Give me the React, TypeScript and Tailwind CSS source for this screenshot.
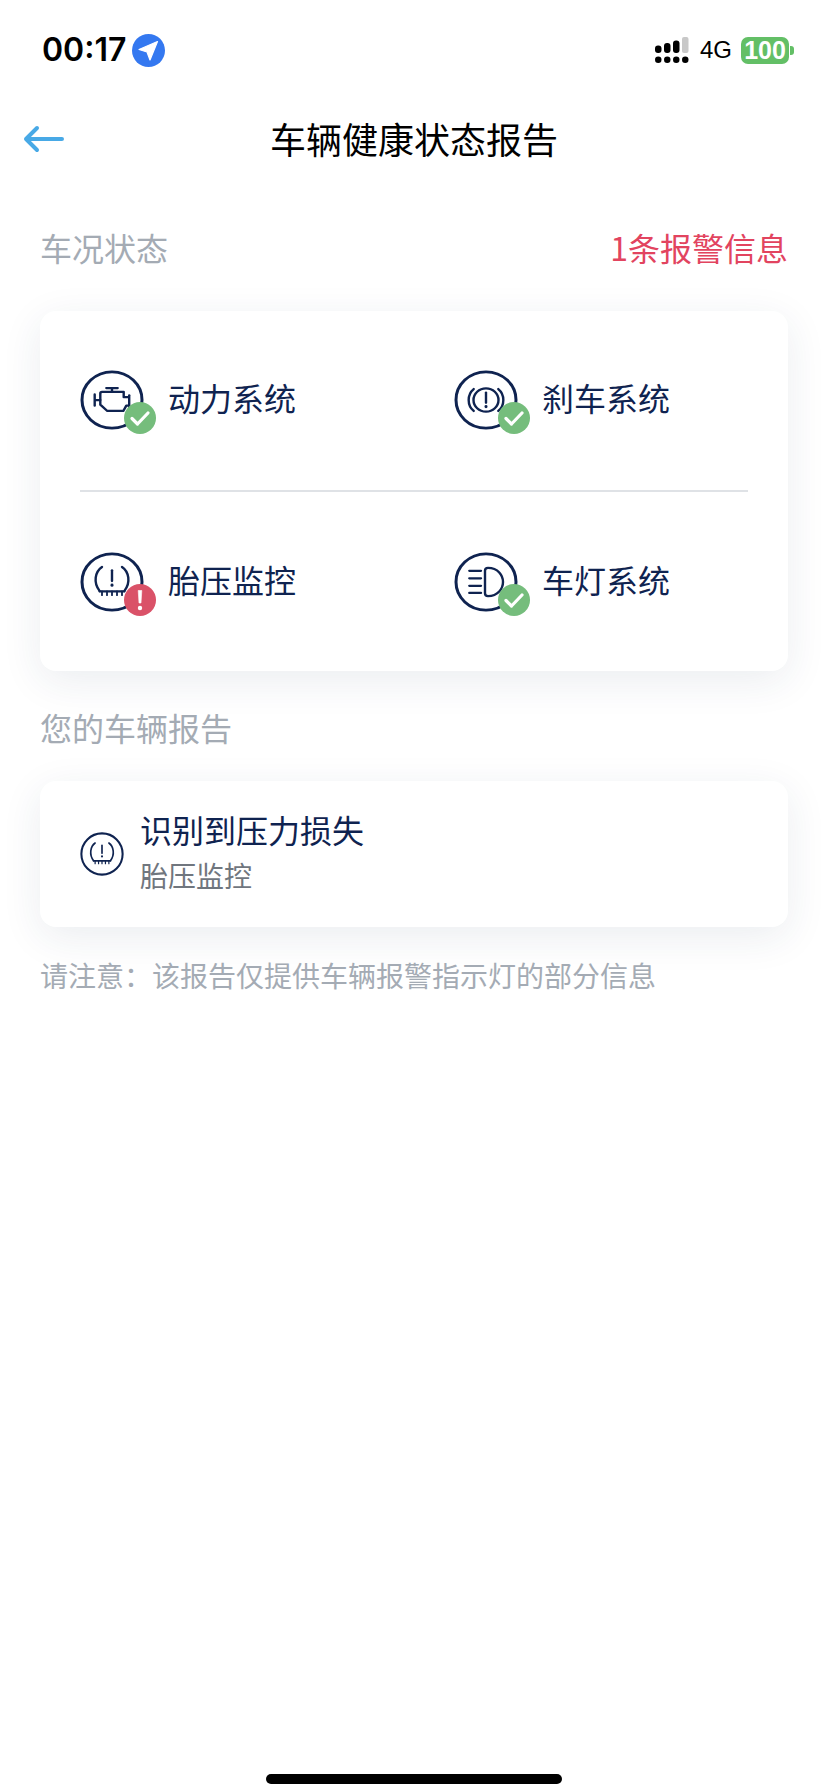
import React from "react";

const navy = "#0f2350";

function Ring({ children, size = 64, h }: { children: React.ReactNode; size?: number; h?: number }) {
  return (
    <svg width={size} height={h ?? size} viewBox="0 0 64 64" preserveAspectRatio="none" fill="none" stroke={navy} strokeWidth="3" strokeLinecap="round" strokeLinejoin="round">
      <circle cx="32" cy="32" r="30" />
      <g strokeWidth="2.4">{children}</g>
    </svg>
  );
}

const Engine = () => (
  <Ring h={60}>
    <path d="M14.7 26v12M14.7 32h5.6" />
    <path d="M20.3 25v12l7 6.7h16l3-5.7h2.8M20.3 25c0-1 .7-1.7 1.7-1.7h21.7V29h5" />
    <path d="M49.2 27v13" />
    <path d="M26.3 19.3h11.4M32 19.3v4" />
  </Ring>
);

const Brake = () => (
  <Ring h={60}>
    <circle cx="32" cy="32" r="12.5" />
    <path d="M32 24v11" />
    <path d="M32 38.8v.4" strokeWidth="3" />
    <path d="M19.7 20.3C13 26 13 38 19.7 43.7M44.3 20.3C51 26 51 38 44.3 43.7" />
  </Ring>
);

const Tire = ({ size = 64, h }: { size?: number; h?: number }) => (
  <Ring size={size} h={h}>
    <path d="M22 16C15 21 13 33 19.7 41.7M42 16c7 5 9 17 2.3 25.7" />
    <path d="M32 19.5v11.5" />
    <path d="M32 35.2v.4" strokeWidth="3" />
    <path d="M19.7 42h24.6" />
    <path d="M22 42v4M27 42v4M32 42v4M37 42v4M42 42v4" strokeWidth="1.8" />
  </Ring>
);

const Lamp = () => (
  <Ring h={60}>
    <path d="M34 17c10 0 15 8 15 15s-5 15-15 15c-2 0-3-1-3-3V20c0-2 1-3 3-3z" />
    <path d="M15.3 20H27M15.3 28H27M15.3 36H27M15.3 43.7H27" />
  </Ring>
);

const Ok = () => (
  <svg width="32" height="32" viewBox="0 0 32 32">
    <circle cx="16" cy="16" r="16" fill="#75bd7c" />
    <path d="M8 16.5l5.5 5.5L24 11" fill="none" stroke="#fff" strokeWidth="3.2" strokeLinecap="round" strokeLinejoin="round" />
  </svg>
);

const Bad = () => (
  <svg width="32" height="32" viewBox="0 0 32 32">
    <circle cx="16" cy="16" r="16" fill="#da5268" />
    <path d="M14.2 6.5h3.6L17 19h-2z" fill="#fff" stroke="#fff" strokeWidth="0.6" strokeLinejoin="round" />
    <circle cx="16" cy="24" r="2.2" fill="#fff" />
  </svg>
);

function Item({ icon, badge, label }: { icon: React.ReactNode; badge: React.ReactNode; label: string }) {
  return (
    <div className="flex items-center">
      <div className="relative w-[64px] h-[60px] shrink-0">
        {icon}
        <div className="absolute left-[44px] top-[32px]">{badge}</div>
      </div>
      <span className="ml-[24px] mb-[6px] text-[32px] leading-[44px] text-[#0f2350]">{label}</span>
    </div>
  );
}

export default function App() {
  return (
    <div className="w-[828px] h-[1792px] bg-white relative overflow-hidden" style={{ fontFamily: '"Noto Sans CJK SC", "Noto Sans", sans-serif' }}>
      <div className="flex items-center justify-between h-[100px] pl-[42px] pr-[34px]">
        <div className="flex items-center gap-[6px]">
          <span className="text-[32px] font-semibold leading-none text-black" style={{ fontFamily: "Inter, sans-serif" }}>00:17</span>
          <svg width="33" height="33" viewBox="0 0 33 33">
            <circle cx="16.5" cy="16.5" r="16.5" fill="#3478f0" />
            <path d="M7 15.5L25.5 7.5 18 26l-3-8z" fill="#fff" stroke="#fff" strokeWidth="1.2" strokeLinejoin="round" />
          </svg>
        </div>
        <div className="flex items-center">
          <svg width="34" height="26" viewBox="0 0 34 26">
            <rect x="0" y="8.5" width="6.5" height="7.5" rx="3" fill="#000" />
            <rect x="9" y="6" width="6.5" height="10" rx="3" fill="#000" />
            <rect x="18" y="3.5" width="6.5" height="12.5" rx="3" fill="#000" />
            <rect x="27" y="0" width="6.5" height="16" rx="2" fill="#c8c8c8" />
            <circle cx="3.25" cy="22.7" r="3.25" fill="#000" />
            <circle cx="12.25" cy="22.7" r="3.25" fill="#000" />
            <circle cx="21.25" cy="22.7" r="3.25" fill="#000" />
            <circle cx="30.25" cy="22.7" r="3.25" fill="#000" />
          </svg>
          <span className="ml-[11px] text-[24px] leading-none text-black" style={{ fontFamily: '"Liberation Sans", sans-serif' }}>4G</span>
          <span className="ml-[9px] w-[48px] h-[27px] rounded-[7px] bg-[#63bf66] flex items-center justify-center text-[25px] font-bold leading-none text-white" style={{ fontFamily: '"Liberation Sans", sans-serif' }}>100</span>
          <span className="ml-[1px] w-[4px] h-[9px] rounded-r-[3px] bg-[#63bf66]" />
        </div>
      </div>

      <div className="relative flex items-start justify-center h-[78px]">
        <svg className="absolute left-[22px] top-[23px]" width="44" height="32" viewBox="0 0 44 32" fill="none" stroke="#48a9e6" strokeWidth="4" strokeLinecap="round" strokeLinejoin="round">
          <path d="M4 16h36M15 5L4 16l11 11" />
        </svg>
        <h1 className="text-[36px] leading-[48px] text-black font-normal mt-[14px]">车辆健康状态报告</h1>
      </div>

      <div className="flex items-center justify-between mt-[46px] pl-[40px] pr-[40px] h-[46px]">
        <span className="text-[32px] text-[#a4abb4]">车况状态</span>
        <span className="text-[32px] text-[#e2445f]">1条报警信息</span>
      </div>

      <div className="mx-[40px] mt-[41px] h-[360px] rounded-[16px] bg-white shadow-[0_10px_40px_rgba(30,50,90,0.09)] px-[40px] flex flex-col">
        <div className="grid grid-cols-[374px_1fr] h-[181px] pb-[1px] items-center border-b-2 border-[#dfe2e6]">
          <Item icon={<Engine />} badge={<Ok />} label="动力系统" />
          <Item icon={<Brake />} badge={<Ok />} label="刹车系统" />
        </div>
        <div className="grid grid-cols-[374px_1fr] h-[179px] pt-[-1px] items-center">
          <Item icon={<Tire h={60} />} badge={<Bad />} label="胎压监控" />
          <Item icon={<Lamp />} badge={<Ok />} label="车灯系统" />
        </div>
      </div>

      <div className="mt-[33px] pl-[40px] text-[32px] leading-[46px] text-[#a4abb4]">您的车辆报告</div>

      <div className="mx-[40px] mt-[31px] h-[146px] rounded-[16px] bg-white shadow-[0_10px_40px_rgba(30,50,90,0.09)] pl-[40px] flex items-center">
        <Tire size={44} />
        <div className="ml-[16px] mb-[4px] flex flex-col">
          <span className="text-[32px] leading-[45px] text-[#0f2350]">识别到压力损失</span>
          <span className="text-[28px] leading-[46px] text-[#70767e]">胎压监控</span>
        </div>
      </div>

      <div className="mt-[28px] pl-[40px] text-[28px] leading-[40px] text-[#a4abb4]">请注意：该报告仅提供车辆报警指示灯的部分信息</div>

      <div className="absolute left-[266px] bottom-[8px] w-[296px] h-[10px] rounded-full bg-black" />
    </div>
  );
}
